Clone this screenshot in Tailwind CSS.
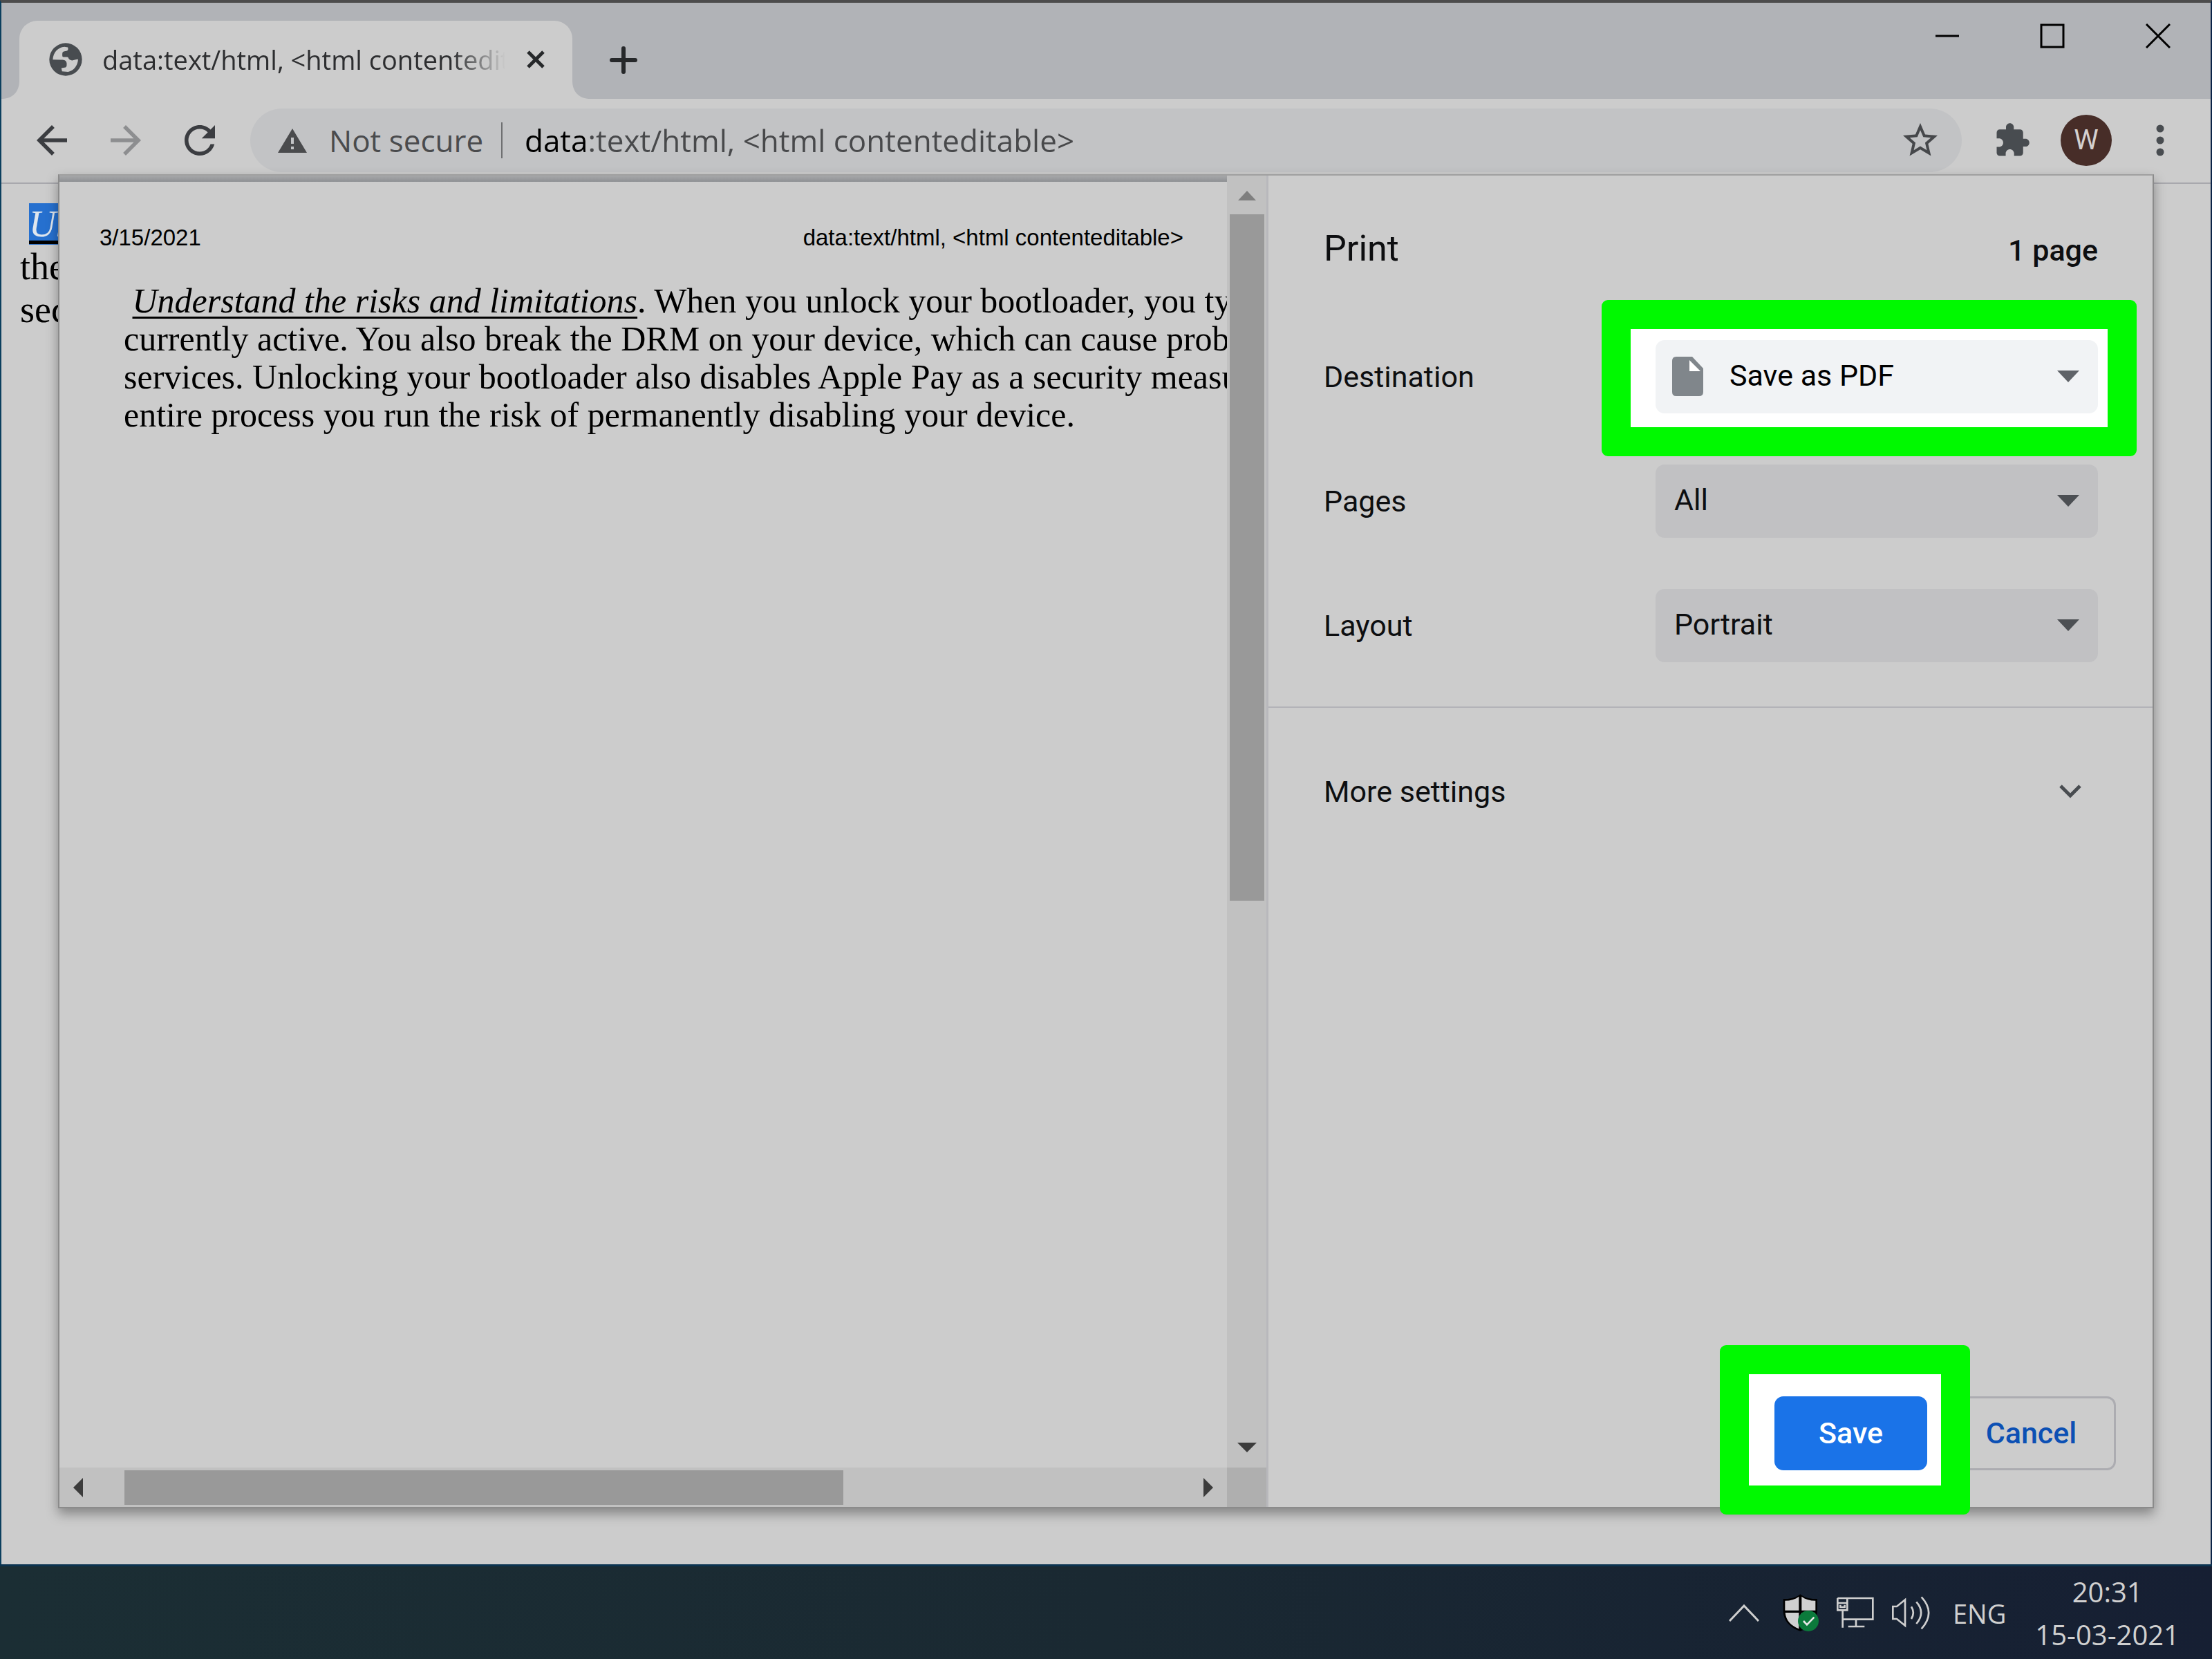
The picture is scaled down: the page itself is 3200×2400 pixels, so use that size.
<!DOCTYPE html>
<html lang="en">
<head>
<meta charset="utf-8">
<meta name="viewport" content="width=device-width, initial-scale=1">
<title>data:text/html, &lt;html contenteditable&gt;</title>
<script src="https://cdn.jsdelivr.net/npm/@tailwindcss/browser@4"></script>
</head>
<body class="flex min-h-screen flex-col bg-[#cccccc] font-['Open_Sans','Noto_Sans',sans-serif] text-black">

<!-- Browser window -->
<div class="flex flex-1 flex-col border-x-2 border-t-4 border-x-[#0b3f5e] border-t-[#4c4c4c] border-r-[#0a2347]">

  <!-- Tab strip -->
  <header class="flex h-[139px] items-stretch bg-[#b1b3b7]">
    <div class="flex w-[26px] items-end" aria-hidden="true">
      <svg class="size-[26px]" viewBox="0 0 26 26" fill="#cccccc"><path d="M0 26C16 26 26 16 26 0V26Z"/></svg>
    </div>
    <div class="mt-[26px] flex w-[800px] items-center rounded-t-[26px] bg-[#cccccc] pr-[39px] pb-[2px] pl-[43px]">
      <svg class="size-[48px] shrink-0" viewBox="64 67 143 143" aria-hidden="true">
        <circle cx="135.500" cy="138.500" r="70.500" fill="#484c50"/>
        <path fill="#cccccc" d="M80 139C82 108 102 86 130 84L145 86C147 94 146 99 141 101L127 104C121 106 121 111 121 121C121 127 124 128 130 128H142C149 128 146 137 156 141C168 146 174 138 189 138C188 165 170 188 146 192L120 190L117 176L135 173C141 171 140 162 140 156C139 141 126 139 112 140Z"/>
      </svg>
      <span class="ml-[29px] min-w-0 flex-1 overflow-hidden whitespace-nowrap text-[38px] leading-[56px] text-[#2d2e30] [mask-image:linear-gradient(90deg,#000_86%,transparent_99%)]">data:text/html, &lt;html contenteditable&gt;</span>
      <button class="ml-[24px] size-[28px] shrink-0" aria-label="Close tab">
        <svg class="size-full" viewBox="0 0 28 28" fill="none" stroke="#26282a" stroke-width="5"><path d="M3 3L25 25M25 3L3 25"/></svg>
      </button>
    </div>
    <div class="flex w-[26px] items-end" aria-hidden="true">
      <svg class="size-[26px]" viewBox="0 0 26 26" fill="#cccccc"><path d="M26 26C10 26 0 16 0 0V26Z"/></svg>
    </div>
    <button class="mt-[26px] ml-[28px] flex size-[40px] self-center" aria-label="New tab">
      <svg class="size-full" viewBox="0 0 40 40" fill="none" stroke="#26282a" stroke-width="6" stroke-linecap="round"><path d="M20 3V37M3 20H37"/></svg>
    </button>
    <div class="ml-auto flex items-start pt-[30px] pr-[58px]">
      <button class="mr-[116px] size-[36px]" aria-label="Minimize">
        <svg class="size-full" viewBox="0 0 36 36" stroke="#000" stroke-width="3"><path d="M1 18H35"/></svg>
      </button>
      <button class="mr-[117px] size-[36px]" aria-label="Maximize">
        <svg class="size-full" viewBox="0 0 36 36" fill="none" stroke="#000" stroke-width="3"><path d="M2 2H34V34H2Z"/></svg>
      </button>
      <button class="size-[36px]" aria-label="Close">
        <svg class="size-full" viewBox="0 0 36 36" fill="none" stroke="#000" stroke-width="3"><path d="M1 1L35 35M35 1L1 35"/></svg>
      </button>
    </div>
  </header>

  <!-- Toolbar -->
  <nav class="flex h-[123px] items-start border-b-2 border-[#a8a8ad] pt-[14px] pr-[67px] pl-[19px]" aria-label="Browser toolbar">
    <button class="flex h-[92px] w-[107px] items-center justify-center" aria-label="Back">
      <svg class="size-[66px]" viewBox="0 0 24 24" fill="#3b3d41"><path d="M20 11H7.830l5.590-5.590L12 4l-8 8 8 8 1.410-1.410L7.830 13H20v-2z"/></svg>
    </button>
    <button class="flex h-[92px] w-[107px] items-center justify-center" aria-label="Forward">
      <svg class="size-[66px]" viewBox="0 0 24 24" fill="#8d8e90"><path d="M4 11h12.170l-5.590-5.590L12 4l8 8-8 8-1.410-1.410L16.170 13H4v-2z"/></svg>
    </button>
    <button class="flex h-[92px] w-[107px] items-center justify-center" aria-label="Reload">
      <svg class="size-[66px]" viewBox="0 0 24 24" fill="#3b3d41"><path d="M17.650 6.350C16.200 4.900 14.210 4 12 4c-4.420 0-7.990 3.580-7.990 8s3.570 8 7.990 8c3.730 0 6.840-2.550 7.730-6h-2.080c-.82 2.330-3.040 4-5.650 4-3.310 0-6-2.690-6-6s2.690-6 6-6c1.660 0 3.140.69 4.220 1.780L13 11h7V4l-2.350 2.350z"/></svg>
    </button>
    <div class="ml-[20px] flex h-[92px] min-w-0 flex-1 items-center rounded-full bg-[#c2c3c5] pr-[30px] pl-[40px] text-[44px]">
      <svg class="h-[35px] w-[42px] shrink-0" viewBox="0 0 42 35" aria-hidden="true"><path fill="#4a4b4d" d="M21 0L42 35H0Z"/><path fill="#c2c3c5" d="M19 13h4v9h-4zM19 26h4v4h-4z"/></svg>
      <span class="ml-[32px] w-[251px] border-r-2 border-[#6f7072] leading-[52px] whitespace-nowrap text-[#4a4b4d]">Not secure</span>
      <input type="text" aria-label="Address" value="data:text/html, &lt;html contenteditable&gt;" class="ml-[32px] h-[80px] min-w-0 flex-1 bg-[linear-gradient(90deg,#000_92px,#48494b_92px)] bg-clip-text text-transparent outline-none">
      <button class="shrink-0" aria-label="Bookmark this tab">
        <svg class="size-[60px]" viewBox="0 0 24 24" fill="#46484b"><path d="M22 9.240l-7.190-.62L12 2 9.190 8.630 2 9.240l5.460 4.730L5.820 21 12 17.270 18.180 21l-1.630-7.030L22 9.240zM12 15.400l-3.760 2.270 1-4.280-3.320-2.880 4.380-.38L12 6.100l1.710 4.040 4.380.38-3.320 2.880 1 4.280L12 15.400z"/></svg>
      </button>
    </div>
    <button class="ml-[46px] flex h-[92px] items-center" aria-label="Extensions">
      <svg class="size-[54px]" viewBox="0 0 24 24" fill="#484c50"><path d="M20.500 11H19V7c0-1.100-.9-2-2-2h-4V3.500C13 2.120 11.880 1 10.500 1S8 2.120 8 3.500V5H4c-1.100 0-1.990.9-1.990 2v3.800H3.500c1.490 0 2.700 1.210 2.700 2.700s-1.210 2.700-2.700 2.700H2V20c0 1.100.9 2 2 2h3.800v-1.500c0-1.490 1.210-2.700 2.700-2.700 1.490 0 2.700 1.210 2.700 2.700V22H17c1.100 0 2-.9 2-2v-4h1.500c1.380 0 2.500-1.120 2.500-2.500S21.880 11 20.500 11z"/></svg>
    </button>
    <button class="mt-[9px] ml-[43px] flex size-[74px] items-center justify-center rounded-full bg-[#472d28] font-['Roboto',sans-serif] text-[40px] text-[#d4d0cf]" aria-label="Profile">W</button>
    <button class="ml-[64px] flex h-[92px] items-center" aria-label="Menu">
      <svg class="h-[50px] w-[12px]" viewBox="0 0 12 50" fill="#484c50"><circle cx="6" cy="8" r="5.500"/><circle cx="6" cy="25" r="5.500"/><circle cx="6" cy="42" r="5.500"/></svg>
    </button>
  </nav>

  <!-- Page with the print dialog over it -->
  <main class="relative flex-1">
    <div class="w-[82px] overflow-hidden pt-[27px] pl-[27px] font-['Liberation_Serif',serif] text-[54px] leading-[62px] whitespace-nowrap">
      <p><span class="ml-[13px] bg-[#2670cf] text-[#dfe6ee] italic"><u class="decoration-black decoration-5 underline-offset-6">Understand</u></span></p>
      <p>the device</p>
      <p>security</p>
    </div>

    <div role="dialog" aria-label="Print" class="absolute -top-[14px] right-[82px] bottom-[81px] left-[82px] flex border-2 border-[#8b8b8b] border-t-[#a0a0a0] bg-[#cccccc] shadow-[0_8px_16px_rgba(0,0,0,0.35)]">

      <!-- Preview -->
      <section class="grid min-w-0 flex-1 grid-cols-[minmax(0,1fr)_57px] grid-rows-[minmax(0,1fr)_57px] border-r-3 border-[#b8b8bc]" aria-label="Preview">
        <div class="overflow-hidden whitespace-nowrap">
          <div class="h-[9px] bg-linear-to-b from-[#a7a8aa] to-[#8e9093]"></div>
          <div class="flex justify-between pt-[61px] pr-[63px] pl-[58px] font-['Liberation_Sans',sans-serif] text-[33px] leading-[40px]">
            <span>3/15/2021</span>
            <span>data:text/html, &lt;html contenteditable&gt;</span>
          </div>
          <div class="mt-[44px] pl-[93px] font-['Liberation_Serif',serif] text-[50px] leading-[55px]">
            <p>&nbsp;<i class="underline decoration-3 underline-offset-6">Understand the risks and limitations</i>. When you unlock your bootloader, you type</p>
            <p>currently active. You also break the DRM on your device, which can cause problems</p>
            <p>services. Unlocking your bootloader also disables Apple Pay as a security measure</p>
            <p>entire process you run the risk of permanently disabling your device.</p>
          </div>
        </div>
        <div class="flex flex-col items-center bg-[#c1c1c1] pt-[22px] pb-[22px]">
          <svg class="h-[14px] w-[26px] shrink-0" viewBox="0 0 26 14" fill="#7f7f7f"><path d="M13 0L26 14H0Z"/></svg>
          <div class="mt-[20px] h-[993px] w-[50px] bg-[#999999]"></div>
          <svg class="mt-auto h-[14px] w-[28px] shrink-0" viewBox="0 0 28 14" fill="#3c3c3c"><path d="M0 0H28L14 14Z"/></svg>
        </div>
        <div class="flex items-center bg-[#c1c1c1] pr-[20px] pl-[20px]">
          <svg class="h-[28px] w-[14px] shrink-0" viewBox="0 0 14 28" fill="#3c3c3c"><path d="M14 0V28L0 14Z"/></svg>
          <div class="ml-[60px] h-[50px] w-[1040px] bg-[#999999]"></div>
          <svg class="ml-auto h-[28px] w-[14px] shrink-0" viewBox="0 0 14 28" fill="#3c3c3c"><path d="M0 0V28L14 14Z"/></svg>
        </div>
        <div class="bg-[#afafaf]"></div>
      </section>

      <!-- Settings -->
      <form class="flex w-[1279px] shrink-0 flex-col font-['Roboto',sans-serif] text-[43px] text-[#0d0e10]">
        <div class="border-b-2 border-[#b3b3b8] pr-[79px] pb-[27px] pl-[80px]">
          <div class="mb-[47px] flex items-baseline justify-between pt-[60px] leading-[92px]">
            <h1 class="text-[52px]">Print</h1>
            <span class="font-medium">1 page</span>
          </div>
          <div class="flex h-[180px] items-center justify-between">
            <label for="destination">Destination</label>
            <div class="relative w-[640px]">
              <div class="absolute -top-[58px] -right-[56px] -bottom-[62px] -left-[78px] rounded-[9px] border-42 border-[#00f900] bg-white"></div>
              <select id="destination" class="relative block h-[106px] w-full appearance-none rounded-[13px] bg-[#f1f3f5] pb-[3px] pl-[107px] text-black"><option>Save as PDF</option></select>
              <svg class="absolute top-[24px] left-[24px] h-[57px] w-[45px]" viewBox="0 0 45 57" aria-hidden="true"><path fill="#80868b" d="M6 0H29L45 17V51Q45 57 39 57H6Q0 57 0 51V6Q0 0 6 0Z"/><path fill="#fff" d="M25 5V21H41Z"/></svg>
              <svg class="pointer-events-none absolute top-[44px] right-[27px] h-[17px] w-[32px]" viewBox="0 0 32 17" fill="#5f6368" aria-hidden="true"><path d="M0 0H32L16 17Z"/></svg>
            </div>
          </div>
          <div class="flex h-[180px] items-center justify-between">
            <label for="pages">Pages</label>
            <div class="relative w-[640px]">
              <select id="pages" class="block h-[106px] w-full appearance-none rounded-[13px] bg-[#c1c1c3] pb-[3px] pl-[27px]"><option>All</option></select>
              <svg class="pointer-events-none absolute top-[44px] right-[27px] h-[17px] w-[32px]" viewBox="0 0 32 17" fill="#4c4f53" aria-hidden="true"><path d="M0 0H32L16 17Z"/></svg>
            </div>
          </div>
          <div class="flex h-[180px] items-center justify-between">
            <label for="layout">Layout</label>
            <div class="relative w-[640px]">
              <select id="layout" class="block h-[106px] w-full appearance-none rounded-[13px] bg-[#c1c1c3] pb-[3px] pl-[27px]"><option>Portrait</option></select>
              <svg class="pointer-events-none absolute top-[44px] right-[27px] h-[17px] w-[32px]" viewBox="0 0 32 17" fill="#4c4f53" aria-hidden="true"><path d="M0 0H32L16 17Z"/></svg>
            </div>
          </div>
        </div>
        <button type="button" class="mt-[76px] flex h-[90px] items-center justify-between pr-[102px] pl-[80px]">
          More settings
          <svg class="h-[22px] w-[34px]" viewBox="0 0 34 22" fill="none" stroke="#484c50" stroke-width="5" aria-hidden="true"><path d="M3 3L17 17L31 3"/></svg>
        </button>
        <div class="mt-auto flex justify-end gap-[28px] pr-[53px] pb-[53px] font-medium">
          <div class="relative z-10">
            <div class="absolute -top-[74px] -right-[62px] -bottom-[64px] -left-[79px] rounded-[9px] border-42 border-[#00f900] bg-white"></div>
            <button type="submit" class="relative block h-[107px] w-[221px] rounded-[13px] bg-[#1a73e8] text-white">Save</button>
          </div>
          <button type="button" class="h-[107px] w-[245px] rounded-[13px] border-3 border-[#acacb1] text-[#0c50b4]">Cancel</button>
        </div>
      </form>
    </div>
  </main>
</div>

<!-- Taskbar -->
<footer class="flex h-[137px] items-center justify-end border-t-3 border-[#0b3350] bg-linear-to-r from-[#1b2e34] via-[#1a2932] to-[#161f33] pr-[47px] text-[#d0d0d0]">
  <button class="mr-[34px]" aria-label="Show hidden icons">
    <svg class="h-[26px] w-[44px]" viewBox="0 0 44 26" fill="none" stroke="#cfcfcf" stroke-width="3"><path d="M1 25L22 3L43 25"/></svg>
  </button>
  <button class="mr-[25px]" aria-label="Windows Security">
    <svg class="h-[54px] w-[52px]" viewBox="294 79 156 162">
      <path d="M370 80C386 94 412 102 444 100V150C444 196 412 226 370 240C328 226 296 196 296 150V100C328 102 354 94 370 80Z" fill="#000"/>
      <path d="M364 90V150H304V108C328 108 348 102 364 90ZM376 90C392 102 412 108 436 108V150H376ZM305 160H364V230C330 216 308 194 305 160ZM376 160H435C432 194 410 216 376 230Z" fill="#d0d0d0"/>
      <circle cx="405" cy="196" r="45" fill="#0b7a3b"/>
      <path d="M384 196L399 212L430 180" fill="none" stroke="#e6e6e6" stroke-width="8"/>
    </svg>
  </button>
  <button class="mr-[24px]" aria-label="Network">
    <svg class="h-[46px] w-[56px]" viewBox="527 97 168 138" fill="none" stroke="#cfcfcf" stroke-width="8">
      <path d="M534 103H687V195H560M534 103V155H576V103M534 124H576M546 132V142H565V132M556 155V231M614 195V225M580 226H651"/>
    </svg>
  </button>
  <button class="mr-[33px]" aria-label="Volume">
    <svg class="h-[48px] w-[56px]" viewBox="766 88 168 144" fill="none" stroke="#cfcfcf" stroke-width="8">
      <path d="M773 133H790L826 104V216L790 187H773ZM853 134Q870 160 853 187M875 113Q916 160 875 208M897 92Q960 160 897 230"/>
    </svg>
  </button>
  <span class="pt-[3px] text-[38px]">ENG</span>
  <time class="ml-[42px] pt-[2px] text-center text-[40px] leading-[62px]" datetime="2021-03-15T20:31">20:31<br>15-03-2021</time>
</footer>
</body>
</html>
